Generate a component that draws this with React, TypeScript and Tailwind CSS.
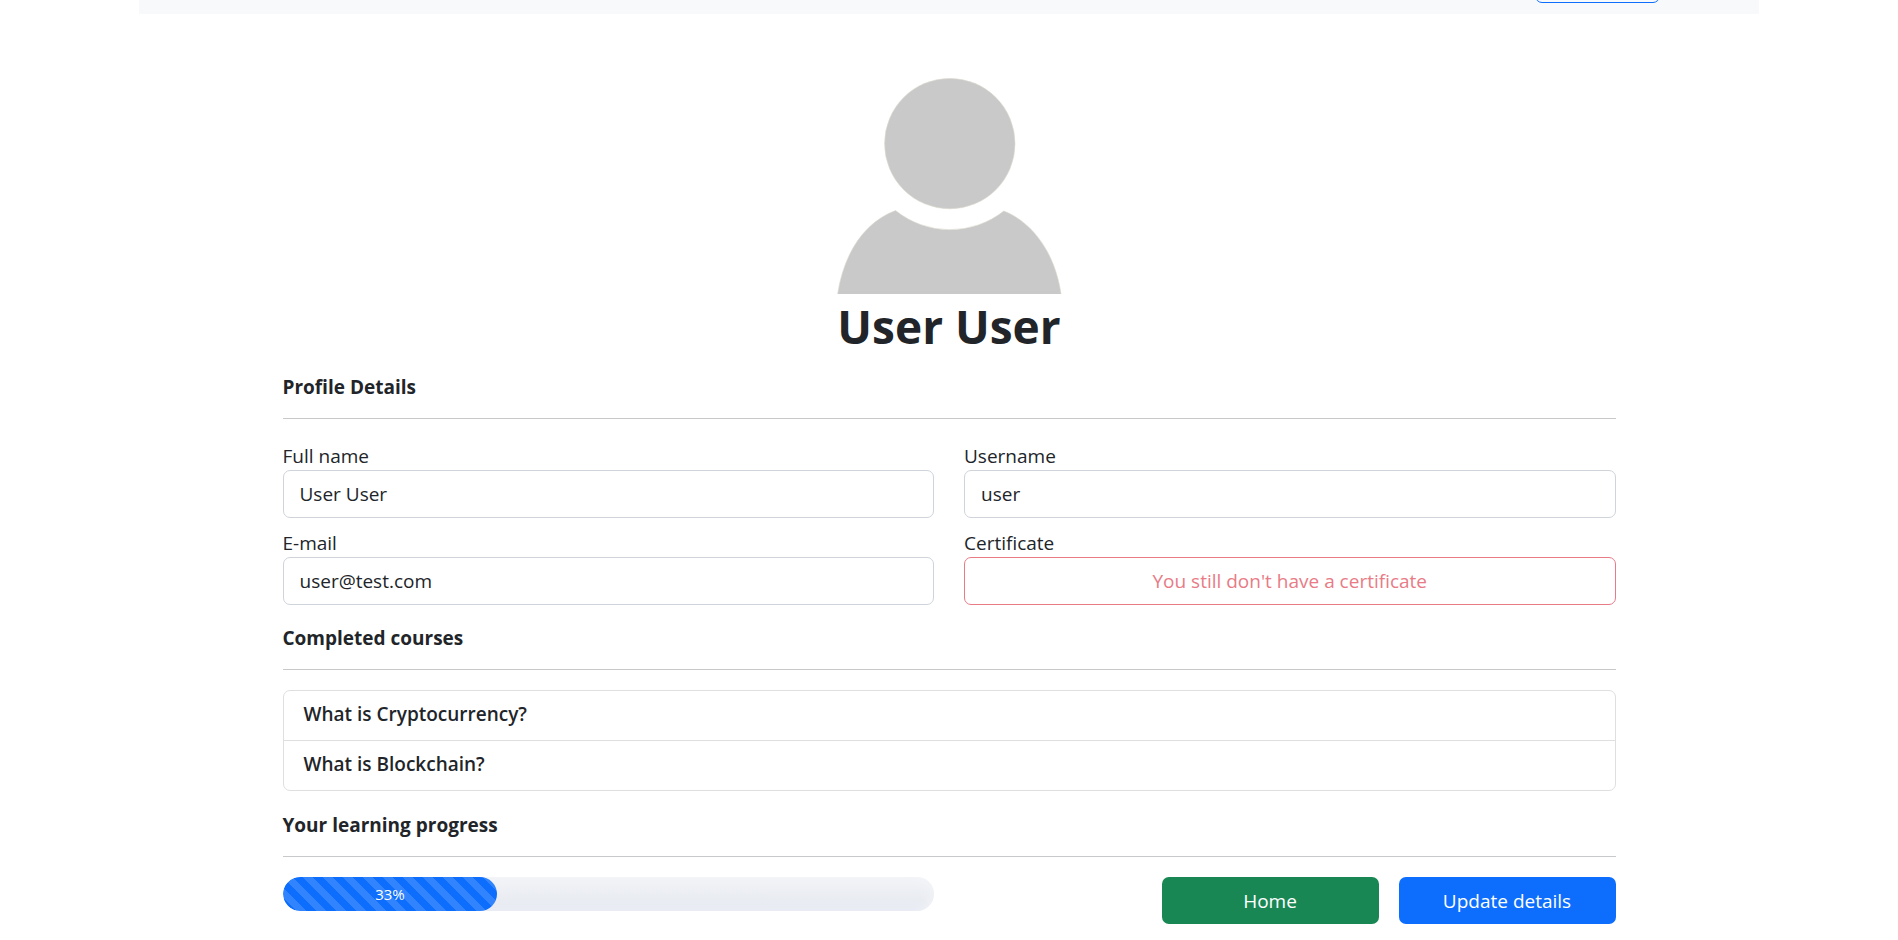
import type { ReactNode } from "react";

const courses = ["What is Cryptocurrency?", "What is Blockchain?"];
const progress = 33;

function Avatar() {
  return (
    <svg
      className="h-[216px] w-[225px]"
      viewBox="0 0 225 216"
      fill="#c9c9c9"
      stroke="#dcd9cc"
      strokeWidth="0.6"
      role="img"
      aria-label="Profile picture"
    >
      <circle cx="112.8" cy="65.6" r="65.2" />
      <path d="M0.5 217C7 173 29 143.5 58.6 132.6A86.8 86.8 0 0 0 166.8 133C194 143.5 218 173 224.2 217Z" />
    </svg>
  );
}

function SectionTitle({ children }: { children: ReactNode }) {
  return (
    <h2 className="mb-5 border-b border-[#c8c9ca] pb-4 text-[19px] leading-[30px] font-bold">
      {children}
    </h2>
  );
}

function Field({ id, label, value, type = "text" }: { id: string; label: string; value: string; type?: string }) {
  return (
    <div>
      <label htmlFor={id} className="block pt-0.5 leading-7">
        {label}
      </label>
      <input
        id={id}
        type={type}
        defaultValue={value}
        className="block h-12 w-full rounded-[7px] border border-[#ced4da] bg-white px-4"
      />
    </div>
  );
}

export default function App() {
  return (
    <div className="min-h-screen bg-white font-['Open_Sans','Noto_Sans',sans-serif] text-[19px] leading-[30px] text-[#212529]">
      <header className="mx-auto flex h-3.5 max-w-[1620px] items-start justify-end overflow-hidden bg-[#f8f9fb] pr-[99px]">
        <button
          type="button"
          aria-label="Account"
          className="-mt-11 h-[47px] w-[125px] shrink-0 rounded-[7px] border border-[#0d6efd]"
        />
      </header>

      <main className="mx-auto max-w-[1333px] pt-16 pb-4">
        <div className="mb-3.5 flex flex-col items-center">
          <Avatar />
          <h1 className="text-[46px] leading-[64px] font-bold">User User</h1>
        </div>

        <section className="mb-[18px]">
          <SectionTitle>Profile Details</SectionTitle>
          <div className="grid grid-cols-2 gap-x-[30px] gap-y-[9px] pt-px">
            <Field id="full-name" label="Full name" value="User User" />
            <Field id="username" label="Username" value="user" />
            <Field id="email" label="E-mail" value="user@test.com" type="email" />
            <div>
              <label htmlFor="certificate" className="block pt-0.5 leading-7">
                Certificate
              </label>
              <button
                id="certificate"
                type="button"
                disabled
                className="block h-12 w-full rounded-[7px] border border-[#e87b86] text-[#e87b86]"
              >
                You still don't have a certificate
              </button>
            </div>
          </div>
        </section>

        <section className="mb-[19px]">
          <SectionTitle>Completed courses</SectionTitle>
          <ul className="divide-y divide-[#dfdfdf] rounded-[7px] border border-[#dfdfdf]">
            {courses.map((course) => (
              <li key={course} className="px-5 pt-2 pb-[11px] font-semibold">
                {course}
              </li>
            ))}
          </ul>
        </section>

        <section>
          <SectionTitle>Your learning progress</SectionTitle>
          <div className="grid grid-cols-2 gap-x-[30px]">
            <div
              role="progressbar"
              aria-label="Your learning progress"
              aria-valuenow={progress}
              aria-valuemin={0}
              aria-valuemax={100}
              className="h-[34px] overflow-hidden rounded-full bg-linear-to-b from-[#f3f4f8] via-[#e9ecf1] via-65% to-[#e8ebf4] shadow-[inset_-8px_0_12px_-6px_#f3f4f8]"
            >
              <div
                className="flex h-full items-center justify-center rounded-full bg-[#0d6efd] bg-[linear-gradient(45deg,rgba(255,255,255,.15)_25%,transparent_25%,transparent_50%,rgba(255,255,255,.15)_50%,rgba(255,255,255,.15)_75%,transparent_75%,transparent)] bg-size-[20px_20px] text-[15px] text-white"
                style={{ width: `${progress}%` }}
              >
                {progress}%
              </div>
            </div>
            <div className="flex justify-end gap-5">
              <button type="button" className="h-[47px] w-[217px] rounded-[7px] bg-[#198754] text-white">
                Home
              </button>
              <button type="button" className="h-[47px] w-[217px] rounded-[7px] bg-[#0d6efd] text-white">
                Update details
              </button>
            </div>
          </div>
        </section>
      </main>
    </div>
  );
}
